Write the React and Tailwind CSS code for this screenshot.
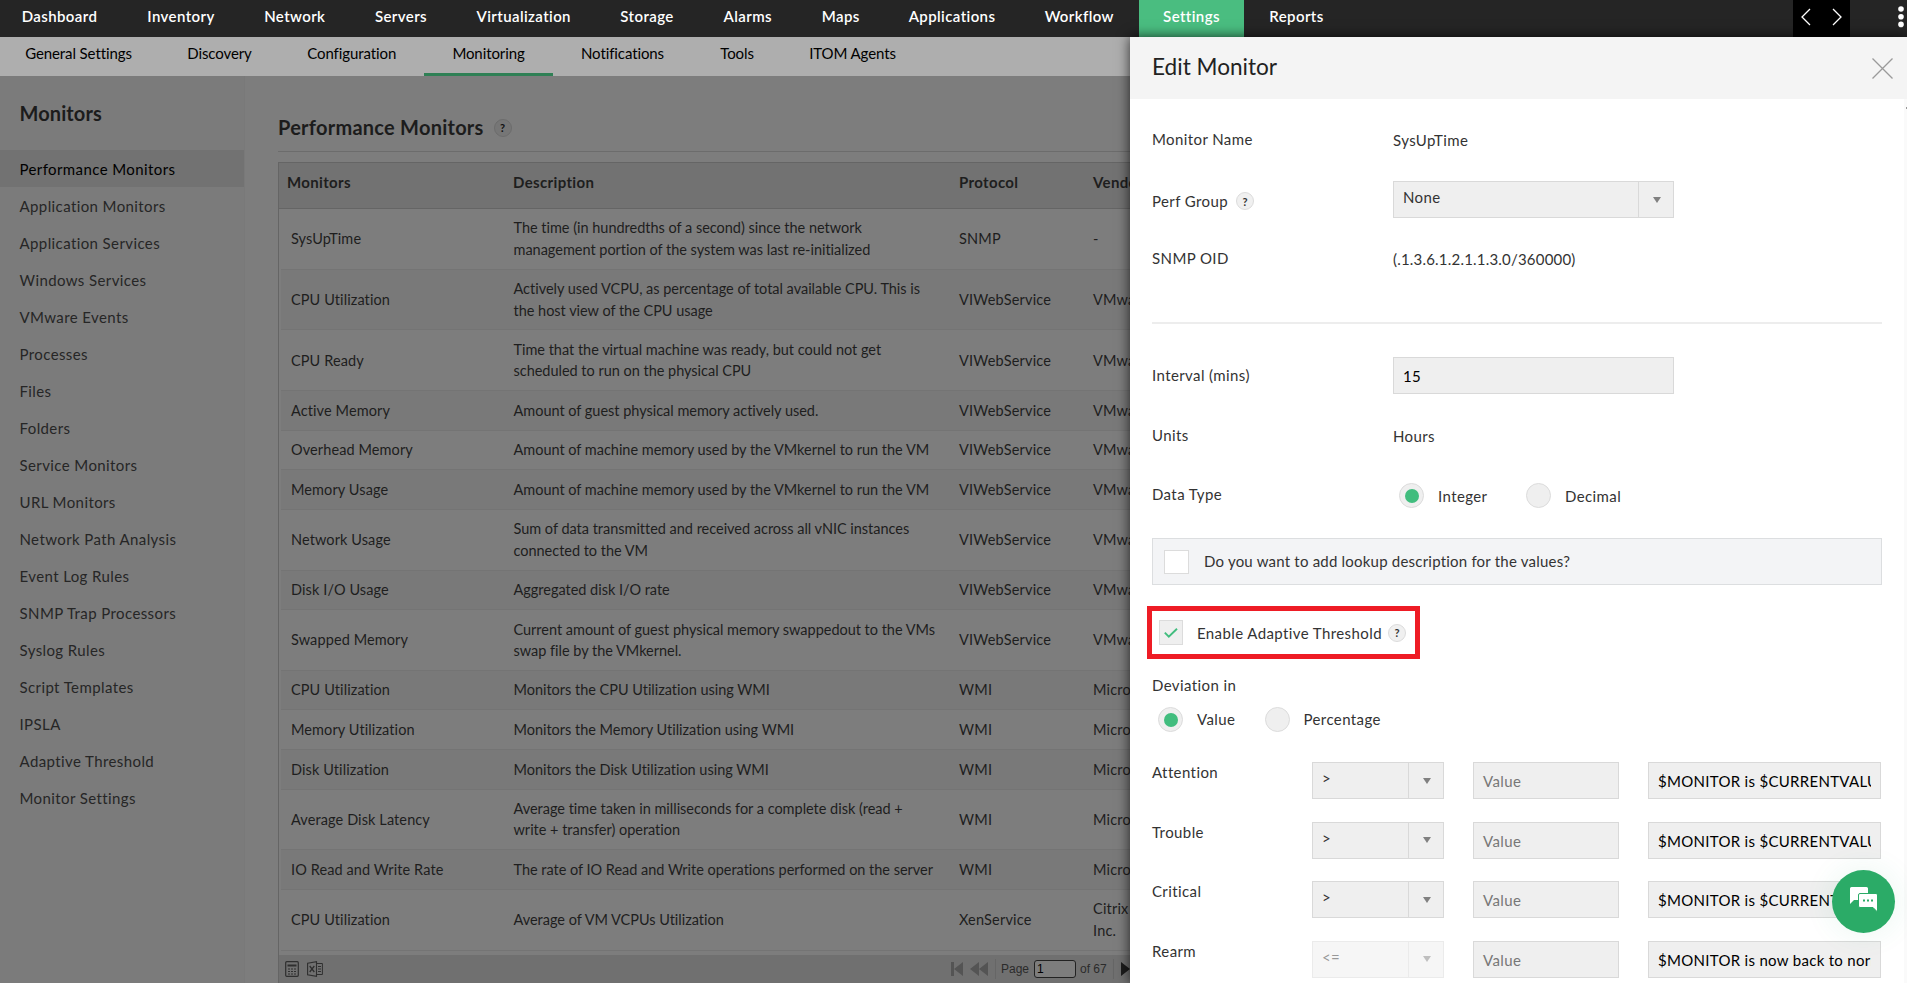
import React from "react";
import clsx from "clsx";

const topNav = [
    { label: "Dashboard", width: "w-[126px]" },
    { label: "Inventory", width: "w-[117px]" },
    { label: "Network", width: "w-[110.5px]" },
    { label: "Servers", width: "w-[102px]" },
    { label: "Virtualization", width: "w-[143.5px]" },
    { label: "Storage", width: "w-[103px]" },
    { label: "Alarms", width: "w-[98.5px]" },
    { label: "Maps", width: "w-[87.5px]" },
    { label: "Applications", width: "w-[135px]" },
    { label: "Workflow", width: "w-[119.5px]" },
    { label: "Settings", width: "w-[105px]", active: true },
    { label: "Reports", width: "w-[105px]" },
];

const subNav = [
    { label: "General Settings", width: "w-[162px]" },
    { label: "Discovery", width: "w-[120px]" },
    { label: "Configuration", width: "w-[144.5px]" },
    { label: "Monitoring", width: "w-[129px]", active: true },
    { label: "Notifications", width: "w-[139px]" },
    { label: "Tools", width: "w-[90px]" },
    { label: "ITOM Agents", width: "w-[141px]" },
];

const sideLinks = [
    "Performance Monitors",
    "Application Monitors",
    "Application Services",
    "Windows Services",
    "VMware Events",
    "Processes",
    "Files",
    "Folders",
    "Service Monitors",
    "URL Monitors",
    "Network Path Analysis",
    "Event Log Rules",
    "SNMP Trap Processors",
    "Syslog Rules",
    "Script Templates",
    "IPSLA",
    "Adaptive Threshold",
    "Monitor Settings",
];

const monitors = [
    { name: "SysUpTime", desc: ["The time (in hundredths of a second) since the network", "management portion of the system was last re-initialized"], protocol: "SNMP", vendor: ["-"] },
    { name: "CPU Utilization", desc: ["Actively used VCPU, as percentage of total available CPU. This is", "the host view of the CPU usage"], protocol: "VIWebService", vendor: ["VMware"] },
    { name: "CPU Ready", desc: ["Time that the virtual machine was ready, but could not get", "scheduled to run on the physical CPU"], protocol: "VIWebService", vendor: ["VMware"] },
    { name: "Active Memory", desc: ["Amount of guest physical memory actively used."], protocol: "VIWebService", vendor: ["VMware"] },
    { name: "Overhead Memory", desc: ["Amount of machine memory used by the VMkernel to run the VM"], protocol: "VIWebService", vendor: ["VMware"] },
    { name: "Memory Usage", desc: ["Amount of machine memory used by the VMkernel to run the VM"], protocol: "VIWebService", vendor: ["VMware"] },
    { name: "Network Usage", desc: ["Sum of data transmitted and received across all vNIC instances", "connected to the VM"], protocol: "VIWebService", vendor: ["VMware"] },
    { name: "Disk I/O Usage", desc: ["Aggregated disk I/O rate"], protocol: "VIWebService", vendor: ["VMware"] },
    { name: "Swapped Memory", desc: ["Current amount of guest physical memory swappedout to the VMs", "swap file by the VMkernel."], protocol: "VIWebService", vendor: ["VMware"] },
    { name: "CPU Utilization", desc: ["Monitors the CPU Utilization using WMI"], protocol: "WMI", vendor: ["Micro"] },
    { name: "Memory Utilization", desc: ["Monitors the Memory Utilization using WMI"], protocol: "WMI", vendor: ["Micro"] },
    { name: "Disk Utilization", desc: ["Monitors the Disk Utilization using WMI"], protocol: "WMI", vendor: ["Micro"] },
    { name: "Average Disk Latency", desc: ["Average time taken in milliseconds for a complete disk (read +", "write + transfer) operation"], protocol: "WMI", vendor: ["Micro"] },
    { name: "IO Read and Write Rate", desc: ["The rate of IO Read and Write operations performed on the server"], protocol: "WMI", vendor: ["Micro"] },
    { name: "CPU Utilization", desc: ["Average of VM VCPUs Utilization"], protocol: "XenService", vendor: ["Citrix", "Inc."] },
];

const thresholds = [
    { label: "Attention", op: ">", message: "$MONITOR is $CURRENTVALUE" },
    { label: "Trouble", op: ">", message: "$MONITOR is $CURRENTVALUE" },
    { label: "Critical", op: ">", message: "$MONITOR is $CURRENTVALUE" },
    { label: "Rearm", op: "<=", message: "$MONITOR is now back to normal", disabled: true },
];

const Help = ({ dark }) => (
    <span
        className={clsx(
            "flex h-[18px] w-[18px] shrink-0 items-center justify-center rounded-full border text-[11px] font-bold leading-none tracking-normal",
            dark ? "border-[#6c6c6c] bg-[#767676] text-[#111]" : "border-[#dcdcdc] bg-[#f0f0f0] text-[#333]"
        )}
    >
        ?
    </span>
);

const Caret = () => (
    <svg width="8" height="6" viewBox="0 0 8 6">
        <path d="M0 0h8L4 6z" fill="#808080" />
    </svg>
);

const Select = ({ value, className, disabled }) => (
    <div className={clsx("flex h-[37px] border border-[#d9d9d9] bg-[#efefef] text-[#333]", className, disabled && "opacity-50")}>
        <span className="flex-1 pl-[9px] leading-[31px]">{value}</span>
        <span className="flex w-[35px] items-center justify-center border-l border-[#d9d9d9] pl-0.5">
            <Caret />
        </span>
    </div>
);

const Radio = ({ checked }) => (
    <span className="flex h-[25px] w-[25px] shrink-0 items-center justify-center rounded-full border border-[#dcdcdc] bg-[#efefef]">
        {checked && <span className="h-[14px] w-[14px] rounded-full bg-[#41bd7e]" />}
    </span>
);

const TopBar = () => (
    <header className="flex h-[37px] shrink-0 bg-[#252525] text-[15px] font-semibold tracking-[0.4px] text-white">
        <nav className="-ml-[3.5px] flex">
            {topNav.map((item) => (
                <a key={item.label} className={clsx("text-center leading-[33px]", item.width, item.active && "bg-[#4abd80]")}>
                    {item.label}
                </a>
            ))}
        </nav>
        <div className="ml-auto flex h-full w-[57px] items-start justify-between bg-black px-[7px] pt-2">
            <svg width="12" height="18" viewBox="0 0 12 18" fill="none" stroke="#fff" strokeWidth="1.3">
                <path d="M10 1L2 9l8 8" />
            </svg>
            <svg width="12" height="18" viewBox="0 0 12 18" fill="none" stroke="#fff" strokeWidth="1.3">
                <path d="M2 1l8 8-8 8" />
            </svg>
        </div>
        <div className="flex w-[57px] justify-end pt-1.5 pr-[3px]">
            <svg width="6" height="22" viewBox="0 0 6 22" fill="#fff">
                <circle cx="3" cy="3" r="2.8" />
                <circle cx="3" cy="10.7" r="2.8" />
                <circle cx="3" cy="18.4" r="2.8" />
            </svg>
        </div>
    </header>
);

const Sidebar = () => (
    <aside className="w-[245px] shrink-0 border-r border-[#797979] bg-[#7b7b7b]">
        <h2 className="h-[74px] pl-[19.5px] text-[20px] font-bold leading-[74px] tracking-[0.1px] text-[#1c1c1c]">Monitors</h2>
        <ul className="text-[15px] tracking-[0.4px] text-[#262626]">
            {sideLinks.map((link, i) => (
                <li key={link} className={clsx("h-[37px] pl-[19.5px] leading-[38px]", i === 0 && "bg-[#727272] text-black")}>
                    {link}
                </li>
            ))}
        </ul>
    </aside>
);

const Pager = () => (
    <div className="flex h-[28px] shrink-0 items-center bg-[#707070] pl-[6px] font-['Liberation_Sans'] text-[12px] text-[#2b2b2b]">
        <svg width="14" height="16" viewBox="0 0 14 16" fill="none" stroke="#2f2f2f">
            <rect x=".7" y=".7" width="12.6" height="14.6" rx="1" strokeWidth="1.2" />
            <path d="M2.5 4.5h9" strokeWidth="2" />
            <path d="M3 8h8M3 10.5h8M3 13h8" strokeDasharray="2 1" />
        </svg>
        <svg className="ml-2" width="16" height="16" viewBox="0 0 16 16" fill="none" stroke="#2f2f2f">
            <path d="M.6 2.2L9.5.7v14.6L.6 13.8z" strokeWidth="1.1" />
            <path d="M2.7 5l4.6 6M7.3 5l-4.6 6" strokeWidth="1.3" />
            <path d="M10 2.5h5.4v11H10M11 5.5h3M11 8h3M11 10.5h3" />
        </svg>
        <div className="ml-[628px] flex items-center">
            <svg width="12" height="14" viewBox="0 0 12 14" fill="#545454">
                <path d="M0 0h3v14H0zM12 0v14L3 7z" />
            </svg>
            <svg className="ml-[7px]" width="18" height="14" viewBox="0 0 18 14" fill="#545454">
                <path d="M9 0v14L0 7zM18 0v14L9 7z" />
            </svg>
            <span className="ml-[7px] h-5 w-px bg-[#666]" />
            <span className="ml-[5px] w-[28px]">Page</span>
            <span className="ml-[5px] h-[18px] w-[42px] rounded-[3px] border border-[#222] bg-[#7d7d7d] pl-0.5 leading-[17px] text-black">1</span>
            <span className="ml-1 w-[28px]">of 67</span>
            <span className="ml-[5px] h-5 w-px bg-[#666]" />
            <svg className="ml-[7px]" width="18" height="14" viewBox="0 0 18 14" fill="#1c1c1c">
                <path d="M0 0v14l9-7zM9 0v14l9-7z" />
            </svg>
        </div>
    </div>
);

const MonitorTable = () => (
    <div className="mt-[10px] flex flex-1 flex-col border-l border-t border-[#656565] text-[#1e1e1e]">
        <div className="flex h-[46px] shrink-0 border-b border-[#656565] bg-[#727272] text-[15px] font-bold leading-[39px] tracking-[0.35px]">
            <span className="w-[226px] pl-[8px]">Monitors</span>
            <span className="w-[445px] pl-[8px]">Description</span>
            <span className="w-[134px] pl-[9px]">Protocol</span>
            <span className="pl-[9px]">Vendor</span>
        </div>
        <div className="h-[746px] shrink-0 text-[14.5px] leading-[21.4px]">
            {monitors.map((m, i) => (
                <div
                    key={i}
                    className={clsx(
                        "ml-0.5 flex items-center border-b border-[#747474]",
                        m.desc.length > 1 || m.vendor.length > 1 ? "h-[60.7px]" : "h-[39.6px]",
                        i % 2 === 1 && "bg-[#797979]"
                    )}
                >
                    <span className="w-[224px] pl-[10px] tracking-[0.1px]">{m.name}</span>
                    <span className="w-[445px] whitespace-nowrap pl-[8.5px] tracking-[-0.02px]">
                        {m.desc.map((line) => (
                            <span key={line} className="block">{line}</span>
                        ))}
                    </span>
                    <span className="w-[134px] pl-[9px] tracking-[0.2px]">{m.protocol}</span>
                    <span className="pl-[9px] tracking-[0.2px]">
                        {m.vendor.map((line) => (
                            <span key={line} className="block">{line}</span>
                        ))}
                    </span>
                </div>
            ))}
        </div>
        <Pager />
    </div>
);

const EditPanel = () => (
    <section className="relative flex w-[777px] shrink-0 flex-col bg-white text-[15px] tracking-[0.4px] text-[#333] shadow-[0_0_12px_rgba(0,0,0,0.75)]">
        <div className="flex h-[62px] shrink-0 items-center justify-between bg-[#f4f4f4] pl-[22px] pr-[14px]">
            <h1 className="pb-0.5 text-[22.6px] leading-none tracking-normal text-[#222]">Edit Monitor</h1>
            <svg width="21" height="21" viewBox="0 0 21 21" stroke="#9a9a9a" strokeWidth="1.3">
                <path d="M.5.5l20 20M20.5.5l-20 20" />
            </svg>
        </div>
        <div className="flex flex-1">
            <div className="w-[774px] pl-[22px]">
                <div className="flex h-[82px] items-center">
                    <span className="w-[241px] pb-0.5">Monitor Name</span>
                    <span>SysUpTime</span>
                </div>
                <div className="flex h-[37px]">
                    <div className="flex w-[241px] items-center gap-[8px] pt-[3px]">
                        Perf Group
                        <Help />
                    </div>
                    <Select value="None" className="w-[281px]" />
                </div>
                <div className="flex h-[82px] items-center">
                    <span className="w-[241px] pb-0.5">SNMP OID</span>
                    <span className="tracking-[0.2px]">(.1.3.6.1.2.1.1.3.0/360000)</span>
                </div>
                <hr className="mt-[22px] w-[730px] border-t-2 border-[#ededed]" />
                <div className="mt-[33px] flex h-[37px]">
                    <span className="w-[241px] leading-[36px]">Interval (mins)</span>
                    <div className="w-[281px] border border-[#d9d9d9] bg-[#efefef] pl-[9px] leading-[37px] text-black">15</div>
                </div>
                <div className="flex h-[84px] items-center">
                    <span className="w-[241px] pb-0.5">Units</span>
                    <span>Hours</span>
                </div>
                <div className="mt-[5px] flex h-[25px] items-center">
                    <span className="w-[247px] pb-0.5">Data Type</span>
                    <Radio checked />
                    <span className="ml-[14px] w-[88px] pt-0.5">Integer</span>
                    <Radio />
                    <span className="ml-[14px] pt-0.5">Decimal</span>
                </div>
                <div className="mt-[30px] flex h-[47px] w-[730px] items-center border border-[#dcdee0] bg-[#f3f4f6] pl-[11px]">
                    <span className="h-6 w-[25px] border border-[#dcdcdc] bg-white" />
                    <span className="ml-[15px] tracking-[0.21px]">Do you want to add lookup description for the values?</span>
                </div>
                <div className="-ml-[5px] mt-[21px] flex h-[53px] w-[273px] items-center border-[5px] border-[#ee1c25] pl-[7px]">
                    <span className="flex h-[25px] w-[24px] items-center justify-center border border-[#dcdcdc] bg-[#efefef]">
                        <svg width="14" height="10" viewBox="0 0 14 10" fill="none" stroke="#41bd7e" strokeWidth="1.9">
                            <path d="M.8 4.600l4 4L13 .8" />
                        </svg>
                    </span>
                    <span className="ml-[14px] mr-[6px] pt-px">Enable Adaptive Threshold</span>
                    <Help />
                </div>
                <p className="mt-[16px] h-[21px] leading-5">Deviation in</p>
                <div className="mt-[11px] flex h-[25px] items-center pl-[6px]">
                    <Radio checked />
                    <span className="ml-[14px] w-[67.5px]">Value</span>
                    <Radio />
                    <span className="ml-[14px]">Percentage</span>
                </div>
                <div className="mt-[30px]">
                    {thresholds.map((t) => (
                        <div key={t.label} className="flex h-[59.6px]">
                            <span className="w-[160px] leading-5">{t.label}</span>
                            <Select value={t.op} disabled={t.disabled} className="w-[132px]" />
                            <div className="ml-[29px] h-[37px] w-[146px] border border-[#d9d9d9] bg-[#efefef] pl-[9px] leading-[37px] text-[#777]">
                                Value
                            </div>
                            <div className="ml-[29px] h-[37px] w-[233px] border border-[#d9d9d9] bg-[#efefef] px-[9px] leading-[37px] text-black">
                                <span className="block overflow-hidden whitespace-nowrap tracking-[0.3px]">{t.message}</span>
                            </div>
                        </div>
                    ))}
                </div>
            </div>
            <div className="flex w-[3px] flex-col items-end justify-between bg-[#fafafa] pb-0.5 pt-2">
                <span className="h-0.5 w-px bg-[#999]" />
                <span className="h-0.5 w-px bg-[#999]" />
            </div>
        </div>
        <button className="absolute bottom-[50px] right-[12px] flex h-[63px] w-[63px] items-center justify-center rounded-full bg-[#2bab67] pb-1 shadow-[0_0_30px_rgba(43,171,103,0.1)]">
            <svg width="28" height="26" viewBox="0 0 28 26">
                <path d="M1.500 0h15a1.500 1.500 0 011.500 1.500V13H4l-4 4V1.500A1.500 1.500 0 011.500 0z" fill="#fff" />
                <path d="M10 6.500h16a1.500 1.500 0 011.500 1.500V25l-4.500-4.500H10A1.500 1.500 0 018.500 19V8A1.500 1.500 0 0110 6.500z" fill="#fff" stroke="#2bab67" />
                <path d="M13 13.500h2M17 13.500h2M21 13.500h2" stroke="#2bab67" strokeWidth="2" />
            </svg>
        </button>
    </section>
);

const App = () => {
    return (
        <div className="flex h-[983px] w-[1907px] flex-col overflow-hidden font-['Lato',sans-serif]">
            <TopBar />
            <div className="flex min-h-0 flex-1">
                <div className="flex w-[1130px] shrink-0 flex-col overflow-hidden bg-[#7d7d7d]">
                    <nav className="flex h-[39px] shrink-0 bg-[#aeaeae] text-[15px] tracking-[-0.1px] text-black">
                        {subNav.map((item, i) => (
                            <a
                                key={item.label}
                                className={clsx("shrink-0 text-center leading-[33px]", i === 0 && "-ml-[2.5px]", item.width, item.active && "border-b-[3px] border-[#2f8055]")}
                            >
                                {item.label}
                            </a>
                        ))}
                    </nav>
                    <div className="flex min-h-0 flex-1">
                        <Sidebar />
                        <main className="ml-[33px] flex w-[900px] shrink-0 flex-col">
                            <div className="flex h-[76px] shrink-0 items-center gap-[10px] border-b border-[#6c6c6c] pt-[28px]">
                                <h2 className="pb-0.5 text-[20px] font-bold leading-none tracking-[0.25px] text-[#1c1c1c]">Performance Monitors</h2>
                                <Help dark />
                            </div>
                            <MonitorTable />
                        </main>
                    </div>
                </div>
                <EditPanel />
            </div>
        </div>
    );
};

export default App;
